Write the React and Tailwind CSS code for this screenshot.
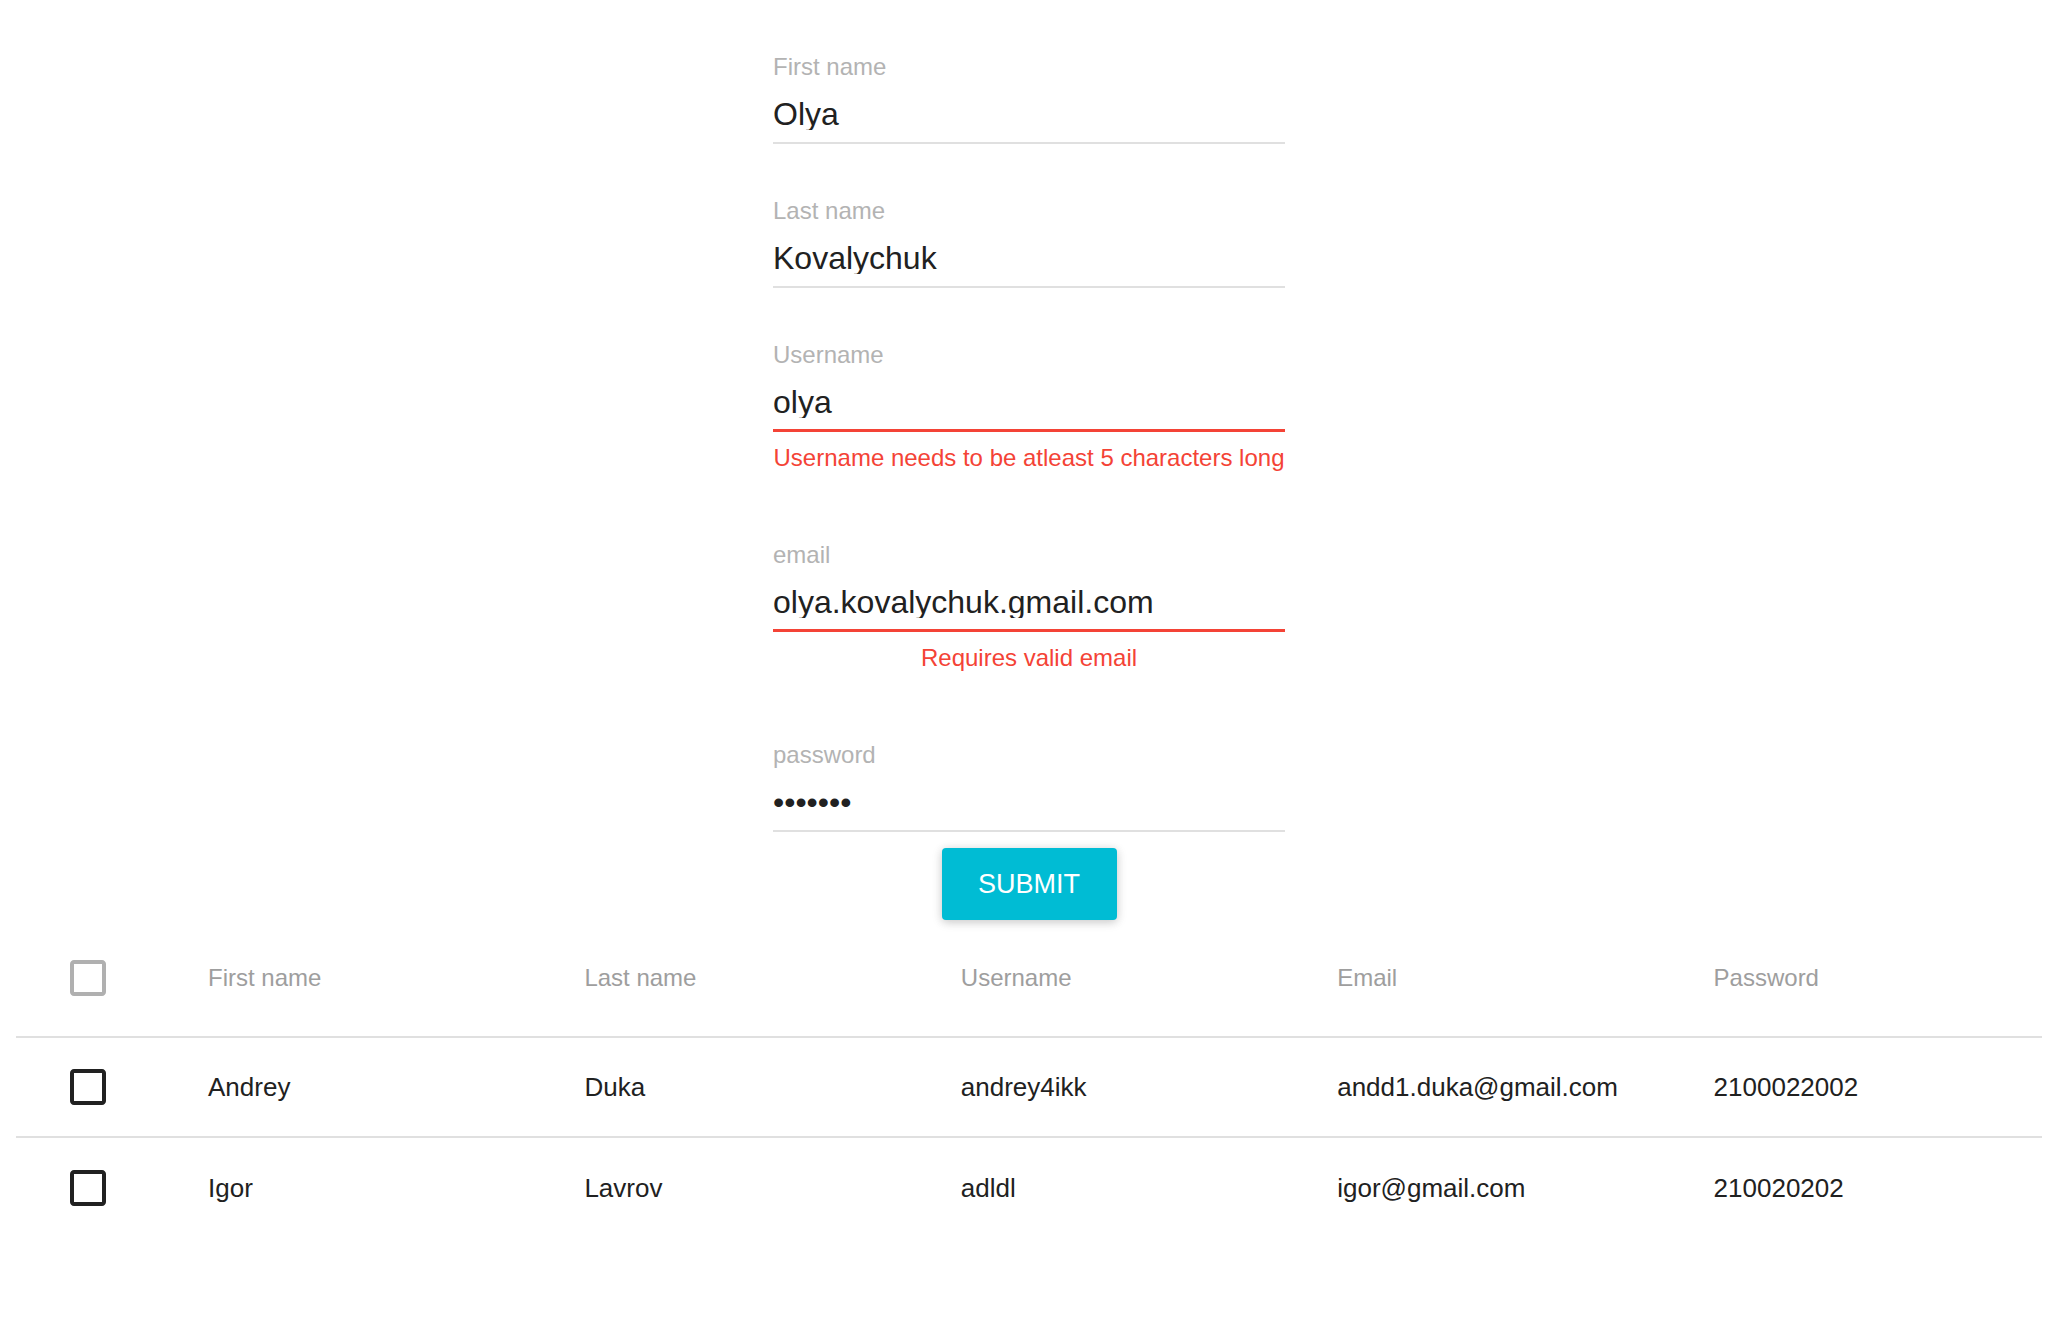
import React from "react";

const BoxIcon = ({ color }) => (
  <svg width="48" height="48" viewBox="0 0 24 24" fill={color} className="block">
    <path d="M19 5v14H5V5h14m0-2H5c-1.11 0-2 .9-2 2v14c0 1.1.89 2 2 2h14c1.1 0 2-.9 2-2V5c0-1.1-.9-2-2-2z" />
  </svg>
);

function Field({ label, value, type = "text", error }) {
  return (
    <div className={error ? "flex h-[200px] flex-col" : "flex h-[144px] flex-col"}>
      <label className="mt-[39px] block h-[24px] text-[24px] leading-[24px] text-[#b3b3b3]">{label}</label>
      <input
        readOnly
        type={type}
        value={value}
        className="mt-[19px] block h-[32px] w-full border-0 bg-transparent p-0 text-[32px] leading-[32px] text-[#212121] outline-none"
      />
      {error ? (
        <div className="mt-[11px] h-[3px] bg-[#f44336]" />
      ) : (
        <div className="mt-[12px] h-[2px] bg-[#e0e0e0]" />
      )}
      {error && (
        <div className="mt-[14px] h-[24px] whitespace-nowrap text-center text-[24px] leading-[24px] text-[#f44336]">
          {error}
        </div>
      )}
    </div>
  );
}

const rows = [
  ["Andrey", "Duka", "andrey4ikk", "andd1.duka@gmail.com", "2100022002"],
  ["Igor", "Lavrov", "adldl", "igor@gmail.com", "210020202"],
];

export default function App() {
  return (
    <div className="min-h-screen bg-white pt-[16px] font-['Liberation_Sans',Arial,sans-serif]">
      <form className="mx-auto w-[512px]" onSubmit={(e) => e.preventDefault()}>
        <Field label="First name" value="Olya" />
        <Field label="Last name" value="Kovalychuk" />
        <Field label="Username" value="olya" error="Username needs to be atleast 5 characters long" />
        <Field label="email" value="olya.kovalychuk.gmail.com" error="Requires valid email" />
        <Field label="password" value="1234567" type="password" />
        <div className="flex justify-center">
          <button
            type="submit"
            className="h-[72px] w-[175px] rounded-[4px] bg-[#00bcd4] text-[27px] uppercase text-white shadow-[0_2px_12px_rgba(0,0,0,0.12),0_2px_8px_rgba(0,0,0,0.12)]"
          >
            Submit
          </button>
        </div>
      </form>

      <div className="mx-[16px]">
        <div className="grid h-[118px] grid-cols-[144px_repeat(5,1fr)] items-center border-b-2 border-[#e0e0e0] text-[24px] text-[#9e9e9e]">
          <div className="pl-[48px]">
            <BoxIcon color="#b0b0b0" />
          </div>
          <div className="pl-[48px]">First name</div>
          <div className="pl-[48px]">Last name</div>
          <div className="pl-[48px]">Username</div>
          <div className="pl-[48px]">Email</div>
          <div className="pl-[48px]">Password</div>
        </div>
        {rows.map((r, i) => (
          <div
            key={i}
            className={
              i === 0
                ? "grid h-[100px] grid-cols-[144px_repeat(5,1fr)] items-center border-b-2 border-[#e0e0e0] text-[26px] text-[#212121]"
                : "grid h-[100px] grid-cols-[144px_repeat(5,1fr)] items-center text-[26px] text-[#212121]"
            }
          >
            <div className="pl-[48px]">
              <BoxIcon color="#212121" />
            </div>
            {r.map((c, j) => (
              <div key={j} className="pl-[48px]">
                {c}
              </div>
            ))}
          </div>
        ))}
      </div>
    </div>
  );
}
